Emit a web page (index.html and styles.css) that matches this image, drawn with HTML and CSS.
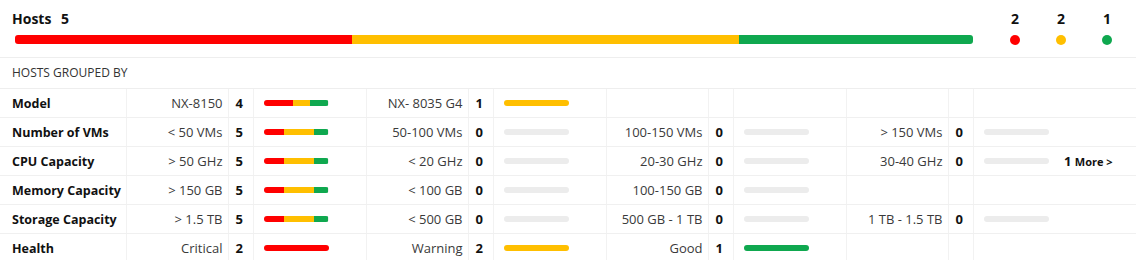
FILE: index.html
```html
<!DOCTYPE html>
<html lang="en">
<head>
    <meta charset="UTF-8">
    <title>Hosts</title>
    <link rel="stylesheet" href="styles.css">
</head>
<body>
    <div class="summary">
        <div class="summary-main">
            <div class="summary-title">Hosts <span class="summary-count">5</span></div>
            <div class="stack-bar">
                <div class="seg red" style="width: 35.2%"></div>
                <div class="seg yellow" style="width: 40.4%"></div>
                <div class="seg green" style="width: 24.4%"></div>
            </div>
        </div>
        <div class="legend">
            <div class="legend-item"><span>2</span><i class="dot red"></i></div>
            <div class="legend-item"><span>2</span><i class="dot yellow"></i></div>
            <div class="legend-item"><span>1</span><i class="dot green"></i></div>
        </div>
    </div>

    <div class="section-title">HOSTS GROUPED BY</div>

    <table class="group-table">
        <colgroup>
            <col class="c-label">
            <col class="c-value"><col class="c-count"><col class="c-bar">
            <col class="c-value"><col class="c-count"><col class="c-bar">
            <col class="c-value"><col class="c-count"><col class="c-bar">
            <col class="c-value"><col class="c-count"><col class="c-bar-last">
            <col class="c-more">
        </colgroup>
        <tr>
            <td class="label">Model</td>
            <td class="value">NX-8150</td><td class="count">4</td>
            <td class="bar-cell"><div class="mini-bar"><div class="seg red" style="width: 45%"></div><div class="seg yellow" style="width: 27%"></div><div class="seg green" style="width: 28%"></div></div></td>
            <td class="value">NX- 8035 G4</td><td class="count">1</td>
            <td class="bar-cell"><div class="mini-bar"><div class="seg yellow" style="width: 100%"></div></div></td>
            <td class="value"></td><td class="count"></td><td class="bar-cell"></td>
            <td class="value"></td><td class="count"></td><td class="bar-cell last"></td>
            <td class="more"></td>
        </tr>
        <tr>
            <td class="label">Number of VMs</td>
            <td class="value">&lt; 50 VMs</td><td class="count">5</td>
            <td class="bar-cell"><div class="mini-bar"><div class="seg red" style="width: 32%"></div><div class="seg yellow" style="width: 46%"></div><div class="seg green" style="width: 22%"></div></div></td>
            <td class="value">50-100 VMs</td><td class="count">0</td>
            <td class="bar-cell"><div class="mini-bar"></div></td>
            <td class="value">100-150 VMs</td><td class="count">0</td>
            <td class="bar-cell"><div class="mini-bar"></div></td>
            <td class="value">&gt; 150 VMs</td><td class="count">0</td>
            <td class="bar-cell last"><div class="mini-bar"></div></td>
            <td class="more"></td>
        </tr>
        <tr>
            <td class="label">CPU Capacity</td>
            <td class="value">&gt; 50 GHz</td><td class="count">5</td>
            <td class="bar-cell"><div class="mini-bar"><div class="seg red" style="width: 32%"></div><div class="seg yellow" style="width: 46%"></div><div class="seg green" style="width: 22%"></div></div></td>
            <td class="value">&lt; 20 GHz</td><td class="count">0</td>
            <td class="bar-cell"><div class="mini-bar"></div></td>
            <td class="value">20-30 GHz</td><td class="count">0</td>
            <td class="bar-cell"><div class="mini-bar"></div></td>
            <td class="value">30-40 GHz</td><td class="count">0</td>
            <td class="bar-cell last"><div class="mini-bar"></div></td>
            <td class="more"><a href="#">1 <small>More &gt;</small></a></td>
        </tr>
        <tr>
            <td class="label">Memory Capacity</td>
            <td class="value">&gt; 150 GB</td><td class="count">5</td>
            <td class="bar-cell"><div class="mini-bar"><div class="seg red" style="width: 32%"></div><div class="seg yellow" style="width: 46%"></div><div class="seg green" style="width: 22%"></div></div></td>
            <td class="value">&lt; 100 GB</td><td class="count">0</td>
            <td class="bar-cell"><div class="mini-bar"></div></td>
            <td class="value">100-150 GB</td><td class="count">0</td>
            <td class="bar-cell"><div class="mini-bar"></div></td>
            <td class="value"></td><td class="count"></td><td class="bar-cell last"></td>
            <td class="more"></td>
        </tr>
        <tr>
            <td class="label">Storage Capacity</td>
            <td class="value">&gt; 1.5 TB</td><td class="count">5</td>
            <td class="bar-cell"><div class="mini-bar"><div class="seg red" style="width: 32%"></div><div class="seg yellow" style="width: 46%"></div><div class="seg green" style="width: 22%"></div></div></td>
            <td class="value">&lt; 500 GB</td><td class="count">0</td>
            <td class="bar-cell"><div class="mini-bar"></div></td>
            <td class="value">500 GB - 1 TB</td><td class="count">0</td>
            <td class="bar-cell"><div class="mini-bar"></div></td>
            <td class="value">1 TB - 1.5 TB</td><td class="count">0</td>
            <td class="bar-cell last"><div class="mini-bar"></div></td>
            <td class="more"></td>
        </tr>
        <tr>
            <td class="label">Health</td>
            <td class="value">Critical</td><td class="count">2</td>
            <td class="bar-cell"><div class="mini-bar"><div class="seg red" style="width: 100%"></div></div></td>
            <td class="value">Warning</td><td class="count">2</td>
            <td class="bar-cell"><div class="mini-bar"><div class="seg yellow" style="width: 100%"></div></div></td>
            <td class="value">Good</td><td class="count">1</td>
            <td class="bar-cell"><div class="mini-bar"><div class="seg green" style="width: 100%"></div></div></td>
            <td class="value"></td><td class="count"></td><td class="bar-cell last"></td>
            <td class="more"></td>
        </tr>
    </table>
</body>
</html>
```

FILE: styles.css
```css
body {
    margin: 0;
    font-family: "Open Sans", "Noto Sans", sans-serif;
    font-size: 13px;
    color: #222;
    background: #fff;
}
.summary {
    display: flex;
    height: 58px;
    border-bottom: 1px solid #eee;
    box-sizing: border-box;
}
.summary-main {
    width: 973px;
    padding: 9px 0 0 12px;
    box-sizing: border-box;
}
.summary-title {
    font-size: 14px;
    font-weight: bold;
    color: #111;
    line-height: 20px;
}
.summary-count {
    margin-left: 6px;
}
.stack-bar {
    display: flex;
    height: 9px;
    margin: 6px 0 0 3px;
    border-radius: 3px;
    overflow: hidden;
}
.seg {
    height: 100%;
}
.red { background: #ff0000; }
.yellow { background: #ffbf00; }
.green { background: #0fa84f; }
.legend {
    display: flex;
    margin-left: 19px;
    padding-top: 9px;
}
.legend-item {
    width: 46px;
    display: flex;
    flex-direction: column;
    align-items: center;
    font-size: 14px;
    font-weight: bold;
    color: #111;
    line-height: 20px;
}
.dot {
    display: block;
    width: 10px;
    height: 10px;
    border-radius: 50%;
    margin-top: 6px;
}
.section-title {
    height: 30px;
    line-height: 30px;
    padding-left: 12px;
    font-size: 12px;
    color: #333;
    border-bottom: 1px solid #eee;
}
.group-table {
    border-collapse: collapse;
    table-layout: fixed;
    width: 1136px;
}
.c-label { width: 126px; }
.c-value { width: 102px; }
.c-count { width: 25px; }
.c-bar { width: 113px; }
.c-bar-last { width: 80px; }
.c-more { width: 83px; }
.group-table td {
    height: 28px;
    padding: 0;
    border-bottom: 1px solid #f0f0f0;
    border-right: 1px solid #f2f2f2;
    white-space: nowrap;
}
.group-table td.last,
.group-table td.more {
    border-right: none;
}
.label {
    padding-left: 12px !important;
    font-weight: bold;
    font-size: 12.5px;
    color: #111;
}
.value {
    text-align: right;
    padding-right: 5px !important;
    color: #3a3a3a;
}
.count {
    padding-left: 7px !important;
    font-weight: bold;
    color: #111;
}
.bar-cell {
    padding-left: 10px !important;
}
.mini-bar {
    display: flex;
    width: 65px;
    height: 6px;
    border-radius: 3px;
    overflow: hidden;
    background: #ececec;
}
.more {
    padding-left: 11px !important;
}
.more a {
    color: #111;
    font-weight: bold;
    text-decoration: none;
}
.more small {
    font-size: 11px;
}
```
